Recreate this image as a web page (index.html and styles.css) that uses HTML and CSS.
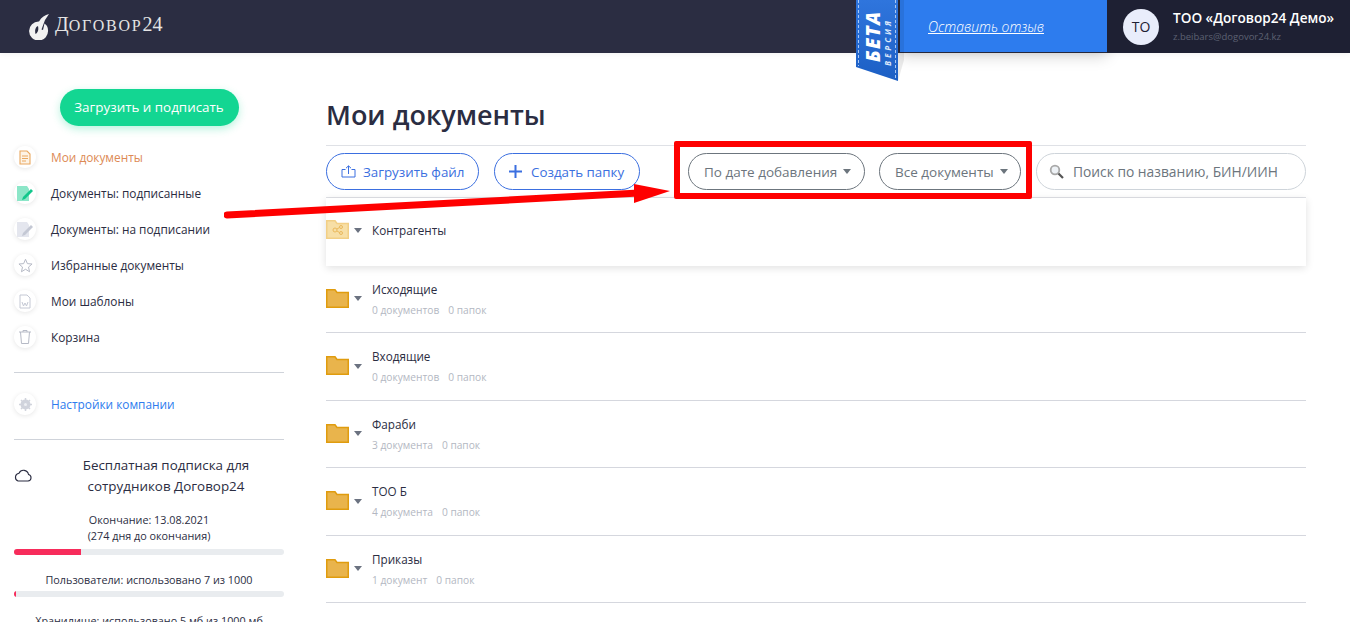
FILE: index.html
```html
<!DOCTYPE html>
<html lang="ru">
<head>
  <meta charset="UTF-8">
  <title>Мои документы</title>
  <link rel="stylesheet" href="styles.css">
</head>
<body>

  <!-- Header -->
  <div class="header">
    <div class="logo">
      <svg width="22" height="26" viewBox="0 0 22 26"><path d="M11 7.500A9.500 9.500 0 1 0 20 16C20 13 18.500 10.800 16.500 9.500L15 16L13.500 15.500L17 6L21 0C17 1 13.500 3 11 7.500Z" fill="#f2f2f2"/><path d="M10 12C7.500 13 6.500 16 7.500 20C9.500 19 11 16 10 12Z" fill="#2b2d42"/></svg>
      <span class="logo-text"><span class="logo-big">Д</span>оговор<span class="logo-big">24</span></span>
    </div>
    <div class="feedback"><a href="#">Оставить отзыв</a></div>
    <div class="user">
      <div class="avatar">ТО</div>
      <div class="user-info">
        <div class="user-name">ТОО «Договор24 Демо»</div>
        <div class="user-mail">z.beibars@dogovor24.kz</div>
      </div>
    </div>
  </div>

  <!-- Beta ribbon -->
  <svg class="ribbon" width="54" height="90" viewBox="0 0 54 90">
    <defs><linearGradient id="rib" x1="0" y1="0" x2="0" y2="1"><stop offset="0" stop-color="#2f75dd"/><stop offset="1" stop-color="#1c5fc4"/></linearGradient></defs>
    <path d="M44 0H50V60L44 81Z" fill="#000" opacity=".08"/>
    <path d="M2 0H44V81L2 67Z" fill="url(#rib)"/>
    <path d="M4.500 0V66M41.500 0V79" stroke="#a9c8f5" stroke-width="1" stroke-dasharray="3 2" fill="none"/>
    <text class="ribbon-big" transform="translate(26 62) rotate(-90)">БЕТА</text>
    <text class="ribbon-small" transform="translate(37 66) rotate(-90)">ВЕРСИЯ</text>
  </svg>

  <div class="layout">

    <!-- Sidebar -->
    <div class="sidebar">
      <div class="upload-wrap"><a href="#" class="upload-btn">Загрузить и подписать</a></div>

      <div class="menu">
        <a href="#" class="menu-item active">
          <span class="menu-icon"><svg width="12" height="15" viewBox="0 0 12 15" fill="none" stroke="#e9a860" stroke-width="1.100"><path d="M1 1H8L11 4V14H1Z" fill="#fdf3e6"/><path d="M3 6H9M3 8.500H9M3 11H7"/></svg></span>
          Мои документы
        </a>
        <a href="#" class="menu-item">
          <span class="menu-icon"><svg width="16" height="15" viewBox="0 0 16 15"><path d="M0 0H10L12 3V15H0Z" fill="#8ce6c8"/><path d="M6 11L14 3L16 5L8 13L5 14Z" fill="#12c78c"/></svg></span>
          Документы: подписанные
        </a>
        <a href="#" class="menu-item">
          <span class="menu-icon"><svg width="16" height="15" viewBox="0 0 16 15"><path d="M0 0H10L12 3V15H0Z" fill="#e4e6ee"/><path d="M6 11L14 3L16 5L8 13L5 14Z" fill="#c4c8d4"/></svg></span>
          Документы: на подписании
        </a>
        <a href="#" class="menu-item">
          <span class="menu-icon"><svg width="15" height="15" viewBox="0 0 24 24" fill="none" stroke="#b6bac6" stroke-width="1.600"><path d="M12 2L15 9L22.500 9.600L16.800 14.500L18.500 22L12 18L5.500 22L7.200 14.500L1.500 9.600L9 9Z"/></svg></span>
          Избранные документы
        </a>
        <a href="#" class="menu-item">
          <span class="menu-icon"><svg width="12" height="15" viewBox="0 0 12 15" fill="none" stroke="#c4c8d4"><path d="M1 1H8L11 4V14H1Z"/><path d="M3 8L4.500 12L6 9L7.500 12L9 8"/></svg></span>
          Мои шаблоны
        </a>
        <a href="#" class="menu-item">
          <span class="menu-icon"><svg width="12" height="14" viewBox="0 0 12 14" fill="none" stroke="#b6bac6"><path d="M0 2H12M4 2V.500H8V2M1.500 2L2.500 13.500H9.500L10.500 2"/></svg></span>
          Корзина
        </a>
      </div>

      <div class="side-line"></div>

      <a href="#" class="menu-item settings">
        <span class="menu-icon"><svg width="13" height="13" viewBox="0 0 13 13"><circle cx="6.500" cy="6.500" r="3.500" fill="none" stroke="#d0d3dc" stroke-width="3"/><path d="M6.500 0V13M0 6.500H13M2 2L11 11M11 2L2 11" stroke="#d0d3dc" stroke-width="1.500"/><circle cx="6.500" cy="6.500" r="1.500" fill="#eef0f4"/></svg></span>
        Настройки компании
      </a>

      <div class="side-line plan-line"></div>

      <div class="plan">
        <svg class="cloud" width="18" height="13" viewBox="0 0 18 13" fill="none" stroke="#2b2d42" stroke-width="1.100"><path d="M4 12H14A3.300 3.300 0 0 0 14.500 5.500A5 5 0 0 0 5 4.300A4 4 0 0 0 4 12Z"/></svg>
        <div class="plan-title">Бесплатная подписка для сотрудников Договор24</div>
      </div>

      <div class="plan-text">Окончание: 13.08.2021<br>(274 дня до окончания)</div>
      <div class="bar"><div class="bar-fill" style="width: 24.800%"></div></div>

      <div class="plan-text users">Пользователи: использовано 7 из 1000</div>
      <div class="bar users-bar"><div class="bar-fill" style="width: 0.7%"></div></div>

      <div class="plan-text storage">Хранилище: использовано 5 мб из 1000 мб</div>
    </div>

    <!-- Documents -->
    <div class="main">
      <h1>Мои документы</h1>

      <div class="toolbar">
        <a href="#" class="pill blue file-btn">
          <svg width="15" height="13" viewBox="0 0 15 13" fill="none" stroke="#3b6fe0"><path d="M4.500 4.500H1V12H14V4.500H10.500M7.500 9V1M5 3.200L7.500 .800L10 3.200"/></svg>
          Загрузить файл
        </a>
        <a href="#" class="pill blue folder-btn">
          <svg width="13" height="13" viewBox="0 0 13 13" fill="none" stroke="#3b6fe0" stroke-width="2"><path d="M6.500 0V13M0 6.500H13"/></svg>
          Создать папку
        </a>
        <div class="pill gray date-btn">По дате добавления <span class="caret"></span></div>
        <div class="pill gray all-btn">Все документы <span class="caret"></span></div>
        <div class="search">
          <svg width="15" height="15" viewBox="0 0 15 15" fill="none"><circle cx="6" cy="6" r="4.300" stroke="#a8a8a8" stroke-width="1.800" fill="#eef2f6"/><path d="M9.500 9.500L14 14" stroke="#555" stroke-width="2.200"/></svg>
          <span>Поиск по названию, БИН/ИИН</span>
        </div>
      </div>

      <div class="folders">
        <div class="folder first">
          <svg class="folder-icon" width="23" height="19" viewBox="0 0 23 19"><path d="M.750.750H9L11 3.500H22.250V18.250H.750Z" fill="#f7dfa6" stroke="#f2cf85" stroke-width="1.500"/><g fill="none" stroke="#eab95c"><circle cx="9" cy="10" r="2"/><circle cx="15" cy="7" r="1.500"/><circle cx="15" cy="13" r="1.500"/><path d="M11 9L13.500 7.500M11 11L13.500 12.500"/></g></svg>
          <span class="caret dark"></span>
          <div class="folder-name">Контрагенты</div>
        </div>
        <div class="folder">
          <svg class="folder-icon" width="23" height="19" viewBox="0 0 23 19"><path d="M.750.750H9L11 3.500H22.250V18.250H.750Z" fill="#e9b44c" stroke="#e09c0e" stroke-width="1.500"/></svg>
          <span class="caret dark"></span>
          <div>
            <div class="folder-name">Исходящие</div>
            <div class="folder-info"><span>0 документов</span><span>0 папок</span></div>
          </div>
        </div>
        <div class="folder">
          <svg class="folder-icon" width="23" height="19" viewBox="0 0 23 19"><path d="M.750.750H9L11 3.500H22.250V18.250H.750Z" fill="#e9b44c" stroke="#e09c0e" stroke-width="1.500"/></svg>
          <span class="caret dark"></span>
          <div>
            <div class="folder-name">Входящие</div>
            <div class="folder-info"><span>0 документов</span><span>0 папок</span></div>
          </div>
        </div>
        <div class="folder">
          <svg class="folder-icon" width="23" height="19" viewBox="0 0 23 19"><path d="M.750.750H9L11 3.500H22.250V18.250H.750Z" fill="#e9b44c" stroke="#e09c0e" stroke-width="1.500"/></svg>
          <span class="caret dark"></span>
          <div>
            <div class="folder-name">Фараби</div>
            <div class="folder-info"><span>3 документа</span><span>0 папок</span></div>
          </div>
        </div>
        <div class="folder">
          <svg class="folder-icon" width="23" height="19" viewBox="0 0 23 19"><path d="M.750.750H9L11 3.500H22.250V18.250H.750Z" fill="#e9b44c" stroke="#e09c0e" stroke-width="1.500"/></svg>
          <span class="caret dark"></span>
          <div>
            <div class="folder-name">ТОО Б</div>
            <div class="folder-info"><span>4 документа</span><span>0 папок</span></div>
          </div>
        </div>
        <div class="folder">
          <svg class="folder-icon" width="23" height="19" viewBox="0 0 23 19"><path d="M.750.750H9L11 3.500H22.250V18.250H.750Z" fill="#e9b44c" stroke="#e09c0e" stroke-width="1.500"/></svg>
          <span class="caret dark"></span>
          <div>
            <div class="folder-name">Приказы</div>
            <div class="folder-info"><span>1 документ</span><span>0 папок</span></div>
          </div>
        </div>
      </div>
    </div>
  </div>

  <!-- Red annotation drawn over the page -->
  <div class="red-box"></div>
  <svg class="red-arrow" width="460" height="50" viewBox="0 0 460 50">
    <path d="M3 32L415 10" stroke="#fe0000" stroke-width="7" stroke-linecap="round"/>
    <path d="M410 1L446 8L410 20Z" fill="#fe0000"/>
  </svg>

</body>
</html>
```

FILE: styles.css
```css
html, body {
  margin: 0;
  padding: 0;
  height: 622px;
  overflow: hidden;
}

body {
  font-family: "Open Sans", "Noto Sans", sans-serif;
  background-color: white;
  color: #2b2d42;
  position: relative;
}

a {
  text-decoration: none;
}

/* Header */
.header {
  display: flex;
  height: 53px;
  background-color: #2b2d42;
  box-shadow: 0 1px 6px rgba(0, 0, 0, 0.06);
}

.logo {
  display: flex;
  align-items: center;
  gap: 5px;
  padding-left: 28px;
  width: 900px;
  box-sizing: border-box;
}

.logo-text {
  margin-top: -4px;
  font-family: "Liberation Serif", serif;
  text-transform: uppercase;
  font-size: 16px;
  letter-spacing: 1.800px;
  color: #e4e4e4;
}

.logo-big {
  font-size: 20px;
  letter-spacing: 0;
}

.feedback {
  width: 207px;
  height: 52px;
  box-sizing: border-box;
  padding: 15px 0 0 28px;
  background-color: #2d7cee;
  box-shadow: 0 4px 14px rgba(0, 0, 0, 0.18);
}

.feedback a {
  font-size: 13.950px;
  font-weight: 300;
  font-style: italic;
  color: white;
  text-decoration: underline;
}

.user {
  display: flex;
  align-items: center;
  gap: 14px;
  flex: 1;
  padding-left: 16px;
  background-color: #1e2033;
}

.avatar {
  width: 36px;
  height: 36px;
  border-radius: 50%;
  background-color: #e9edfb;
  color: #1e2033;
  font-size: 14px;
  line-height: 36px;
  text-align: center;
}

.user-info {
  margin-top: -3px;
}

.user-name {
  font-size: 13.600px;
  font-weight: 600;
  color: white;
}

.user-mail {
  font-size: 9.500px;
  margin-top: 3px;
  color: #5d6072;
}

.ribbon {
  position: absolute;
  left: 854px;
  top: 0;
}

.ribbon-big {
  font-size: 19px;
  font-weight: 800;
  font-style: italic;
  letter-spacing: 1.500px;
  fill: white;
}

.ribbon-small {
  font-size: 8px;
  font-weight: 700;
  font-style: italic;
  letter-spacing: 3px;
  fill: #dbe8fb;
}

.layout {
  display: flex;
}

/* Sidebar */
.sidebar {
  width: 270px;
  margin: 0 42px 0 14px;
  flex-shrink: 0;
}

.upload-wrap {
  padding-top: 36px;
  text-align: center;
}

.upload-btn {
  display: inline-block;
  width: 179px;
  height: 37px;
  line-height: 37px;
  border-radius: 19px;
  background-color: #13d692;
  box-shadow: 0 3px 8px rgba(19, 214, 146, 0.3);
  color: white;
  font-size: 13.400px;
  font-weight: 500;
  text-align: center;
}

.menu {
  margin-top: 13px;
}

.menu-item {
  display: flex;
  align-items: center;
  gap: 15px;
  height: 36px;
  font-size: 11.850px;
  color: #2b2d42;
}

.menu-item.active {
  color: #dd8a55;
}

.menu-icon {
  display: flex;
  align-items: center;
  justify-content: center;
  width: 22px;
  height: 22px;
  border-radius: 50%;
  background-color: white;
  box-shadow: 0 1px 5px rgba(0, 0, 0, 0.1);
}

.side-line {
  height: 1px;
  margin: 17px 0 16px;
  background-color: #cfd3da;
}

.menu-item.settings {
  color: #2d7cee;
  margin-top: -1px;
  height: 32px;
}

.side-line.plan-line {
  margin: 19px 0 15px;
}

.plan {
  display: flex;
  align-items: center;
}

.cloud {
  flex-shrink: 0;
  margin-top: -2px;
}

.plan-title {
  width: 190px;
  margin-left: 39px;
  font-size: 13.400px;
  line-height: 21px;
  text-align: center;
}

.plan-text {
  margin-top: 15px;
  font-size: 10.800px;
  line-height: 16px;
  text-align: center;
}

.plan-text.users {
  margin-top: 17px;
}

.plan-text.storage {
  margin-top: 16px;
}

.bar {
  height: 6px;
  margin-top: 5px;
  border-radius: 3px;
  background-color: #e9ecef;
  overflow: hidden;
}

.bar.users-bar {
  margin-top: 3px;
}

.bar-fill {
  height: 6px;
  background-color: #f72c5b;
}

/* Documents */
.main {
  width: 980px;
}

h1 {
  margin: 0;
  padding-top: 42px;
  height: 50px;
  font-size: 27px;
  line-height: 40px;
  font-weight: 600;
  color: #2b2d42;
}

.toolbar {
  display: flex;
  align-items: center;
  height: 51px;
  border-top: 1px solid #dfe1e6;
  border-bottom: 1px solid #dfe1e6;
}

.pill {
  display: flex;
  align-items: center;
  box-sizing: border-box;
  height: 37px;
  border-radius: 19px;
  white-space: nowrap;
}

.pill.blue {
  border: 1px solid #3b6fe0;
  color: #3b6fe0;
  font-size: 13.350px;
  padding-left: 14px;
}

.pill.gray {
  border: 1px solid #6c757d;
  color: #6c757d;
  font-size: 13.500px;
  gap: 6px;
  padding-left: 15px;
}

.file-btn { width: 153px; margin-right: 15px; gap: 7px; }
.folder-btn { width: 146px; margin-right: 48px; gap: 9px; }
.date-btn { width: 177px; margin-right: 14px; }
.all-btn { width: 142px; margin-right: 15px; }

.caret {
  width: 0;
  height: 0;
  margin-bottom: 1px;
  border-left: 4.500px solid transparent;
  border-right: 4.500px solid transparent;
  border-top: 5px solid #6c757d;
}

.search {
  display: flex;
  align-items: center;
  gap: 9px;
  box-sizing: border-box;
  width: 270px;
  height: 37px;
  padding-left: 12px;
  border: 1px solid #ced4da;
  border-radius: 19px;
  font-size: 13.800px;
  color: #6c757d;
}

.folder {
  display: flex;
  align-items: center;
  box-sizing: border-box;
  height: 67.500px;
  border-bottom: 1px solid #d5d7de;
}

.folder.first {
  border-bottom: none;
  box-shadow: 0 2px 8px rgba(0, 0, 0, 0.12);
  padding-bottom: 3px;
}

.folder-icon {
  flex-shrink: 0;
  margin-top: -1px;
}

.caret.dark {
  margin: 3px 10px 3px 5px;
  border-top-color: #6b7280;
}

.folder-name {
  font-size: 11.700px;
  color: #2b2d42;
}

.folder-info {
  display: flex;
  gap: 9px;
  margin-top: 6px;
  font-size: 10.200px;
  color: #b3b7c2;
}

/* Red annotation */
.red-box {
  position: absolute;
  left: 674px;
  top: 141px;
  width: 358px;
  height: 58px;
  box-sizing: border-box;
  border: 6px solid #fe0000;
  border-radius: 2px;
}

.red-arrow {
  position: absolute;
  left: 224px;
  top: 183px;
}
```
